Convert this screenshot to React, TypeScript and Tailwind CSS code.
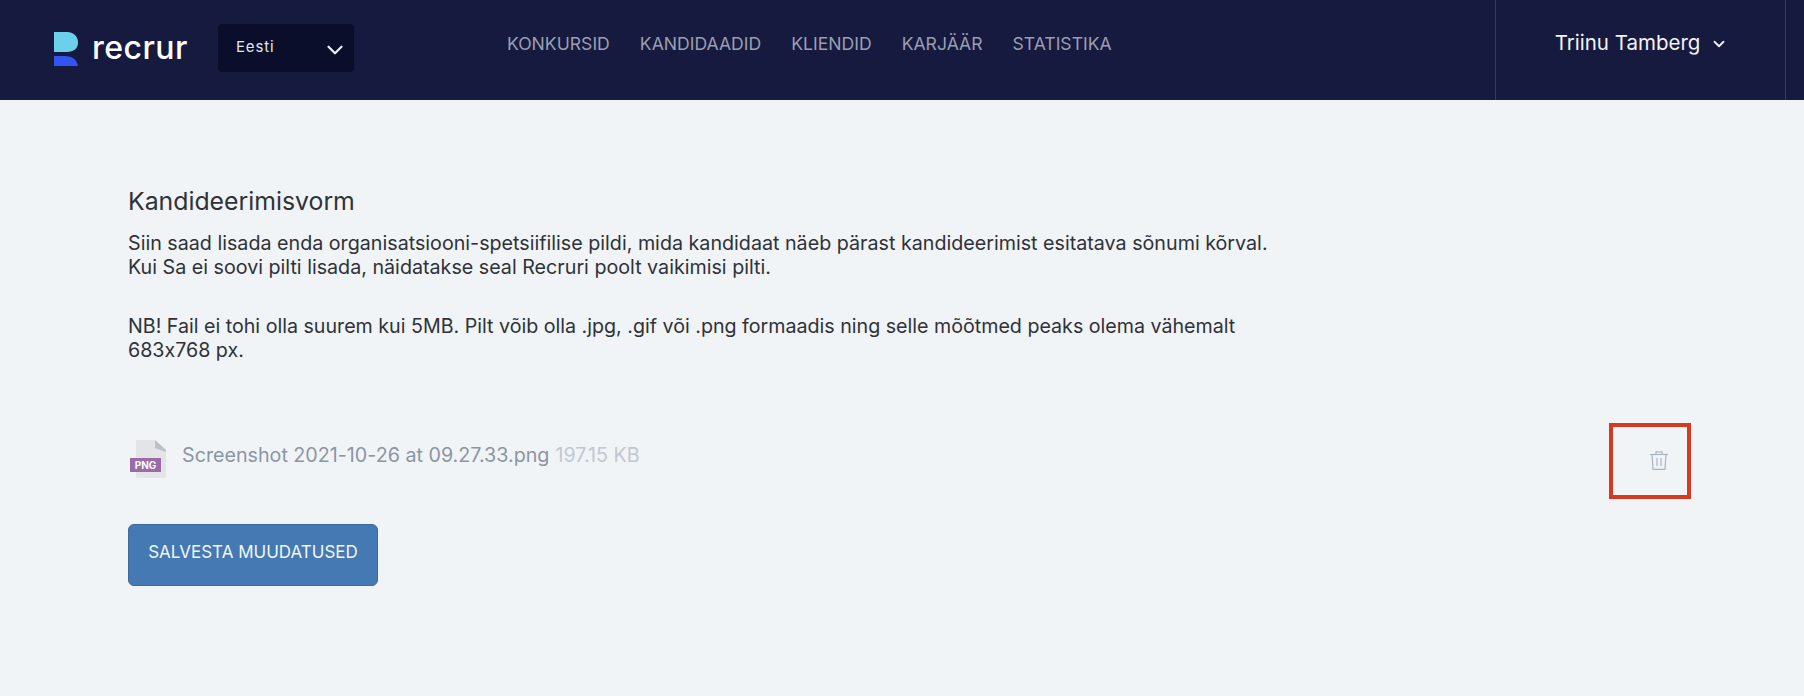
import React from 'react';
import { ChevronDown } from 'lucide-react';

const navItems = ['KONKURSID', 'KANDIDAADID', 'KLIENDID', 'KARJÄÄR', 'STATISTIKA'];

const Logo: React.FC = () => (
  <div className="flex items-center">
    <svg width="24" height="34" viewBox="0 0 24 34" className="shrink-0">
      <path d="M0 0H13C19.5 0 24 4.5 24 10.5C24 16.5 19.5 20 13 20H0Z" fill="#6dd0ea" />
      <path d="M0 24H11C18 24 23 27.5 24 34H0Z" fill="#3354f4" />
    </svg>
    <span className="ml-[14px] -mt-[2px] text-[32px] leading-none font-medium tracking-[0.015em] text-white">recrur</span>
  </div>
);

const PngIcon: React.FC = () => (
  <svg width="36" height="38" viewBox="0 0 36 38" className="shrink-0">
    <path d="M6 1.5C6 0.7 6.7 0 7.5 0H25L36 10V36C36 37.1 35.1 38 34 38H7.5C6.7 38 6 37.3 6 36.5Z" fill="#e2e4e8" />
    <path d="M25 0L36 10V12L25 8Z" fill="#bcc1c9" />
    <rect x="0" y="18" width="31" height="14" fill="#9d6aa8" />
    <text x="15.5" y="29" textAnchor="middle" fontSize="10" fontWeight="700" fill="#fff" fontFamily="Inter, sans-serif">PNG</text>
  </svg>
);

const TrashIcon: React.FC = () => (
  <svg width="18" height="19" viewBox="0 0 18 19" fill="none" stroke="#a9b5c4" strokeWidth="1.2">
    <path d="M0 3.5H18" />
    <path d="M6 3.5V0.8H12V3.5" />
    <path d="M2 3.5L3 18.4H15L16 3.5" />
    <path d="M7 7V15M11 7V15" />
  </svg>
);

export default function App() {
  return (
    <div className="relative min-h-[696px] bg-[#f0f4f7] font-['Inter',sans-serif] text-[#2f3237] [font-feature-settings:'calt'_0]">
      <header className="flex h-[100px] items-stretch bg-[#161a3e]">
        <div className="flex items-center pb-[2px] pl-[54px]">
          <Logo />
          <div className="mb-[2px] ml-[30px] flex h-[48px] w-[136px] items-center justify-between rounded bg-[#0b0e2b] pr-[6px] pl-[18px] text-[15px] tracking-[0.06em] text-[#e3e5ea]">
            <span className="-mt-[2px]">Eesti</span>
            <ChevronDown className="mt-[4px] h-[26px] w-[26px] text-[#f0f1f4]" strokeWidth={2} />
          </div>
        </div>
        <nav className="ml-[153px] flex gap-[30px] pt-[34px] text-[17.6px] leading-[20px] text-[#9a9eb4]">
          {navItems.map((item) => (
            <span key={item}>{item}</span>
          ))}
        </nav>
        <div className="mr-[18px] ml-auto flex w-[291px] justify-center border-x border-[#3c3e4a] pt-[30px] pl-[2px]">
          <div className="flex h-[26px] items-center gap-[10px] text-[20.5px] text-[#f1f2f5]">
            <span>Triinu Tamberg</span>
            <ChevronDown className="mt-[2px] h-[18px] w-[18px]" strokeWidth={2.4} />
          </div>
        </div>
      </header>

      <main className="pt-[86px] pr-[113px] pl-[128px]">
        <h1 className="text-[24.8px] leading-[30px] font-normal">Kandideerimisvorm</h1>
        <p className="mt-[15px] w-[1150px] text-[19.7px] leading-[24px]">
          Siin saad lisada enda organisatsiooni-spetsiifilise pildi, mida kandidaat näeb pärast kandideerimist esitatava sõnumi kõrval.
          <br />
          Kui Sa ei soovi pilti lisada, näidatakse seal Recruri poolt vaikimisi pilti.
        </p>
        <p className="mt-[35px] w-[1150px] text-[19.65px] leading-[24px]">
          NB! Fail ei tohi olla suurem kui 5MB. Pilt võib olla .jpg, .gif või .png formaadis ning selle mõõtmed peaks olema vähemalt 683x768 px.
        </p>
        <div className="mt-[78px] flex items-start justify-between">
          <div className="flex items-start pl-[2px]">
            <PngIcon />
            <span className="mt-[2px] ml-[16px] text-[19.7px] leading-[26px] text-[#8c95a3]">Screenshot 2021-10-26 at 09.27.33.png</span>
            <span className="mt-[2px] ml-[6px] text-[19.7px] leading-[26px] text-[#c2c8d1]">197.15 KB</span>
          </div>
          <div className="mt-[11px] mr-[23px]">
            <TrashIcon />
          </div>
        </div>
        <button className="mt-[46px] h-[62px] w-[250px] rounded-md border border-[#3c6a9e] bg-[#4479b3] pb-[4px] text-[17px] text-[#f2f6fa]">
          SALVESTA MUUDATUSED
        </button>
      </main>

      <div className="absolute top-[423px] left-[1609px] h-[76px] w-[82px] border-4 border-[#d7391f]" />
    </div>
  );
}
